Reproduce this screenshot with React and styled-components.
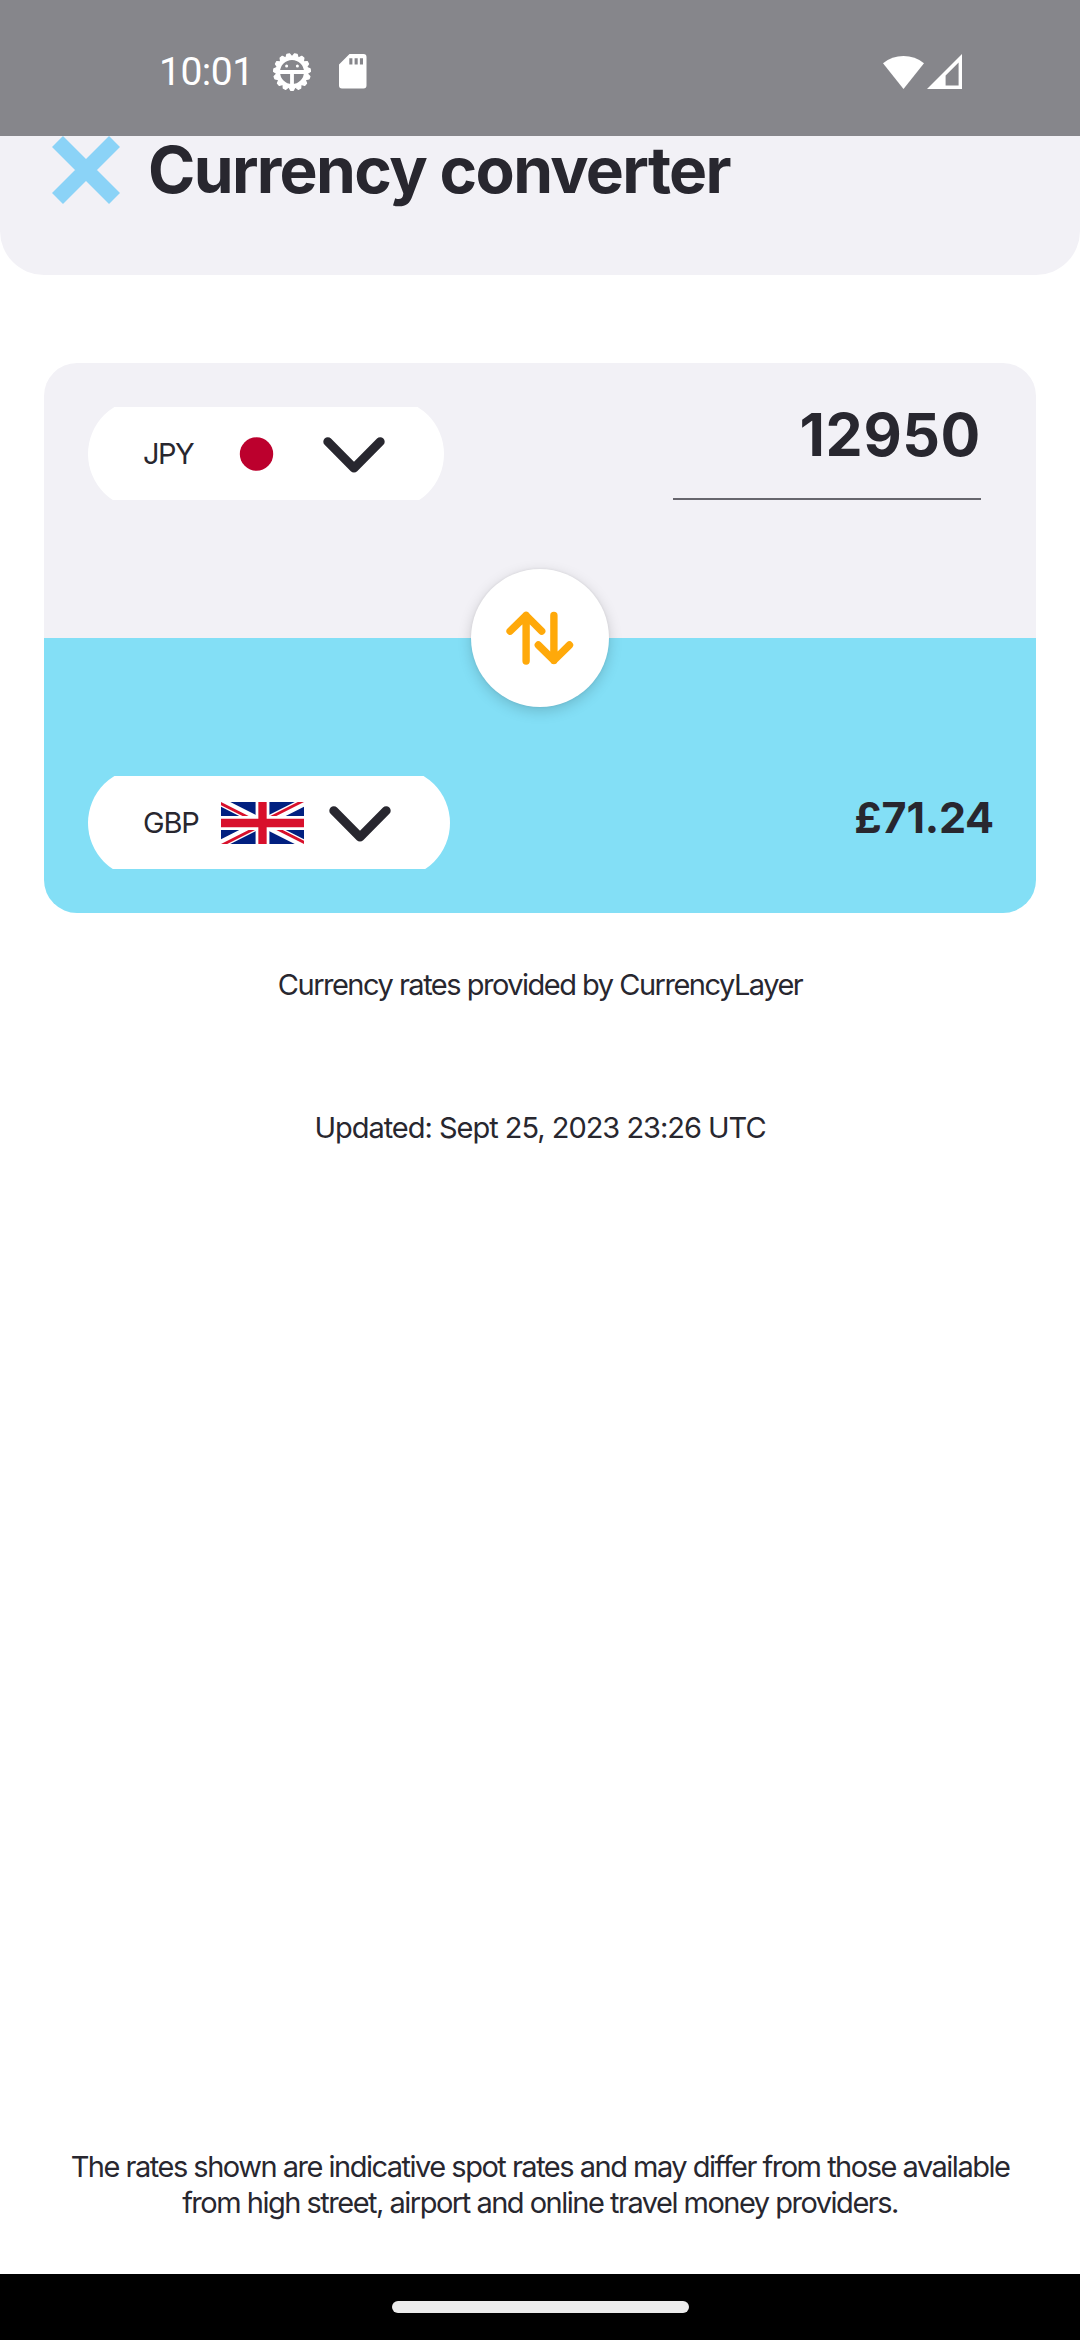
import React from "react";
import styled, { createGlobalStyle } from "styled-components";

const GlobalStyle = createGlobalStyle`
  *, *::before, *::after { box-sizing: border-box; }
  html, body { margin: 0; padding: 0; background: #fff; }
`;

const Screen = styled.div`
  width: 1080px;
  height: 2340px;
  display: flex;
  flex-direction: column;
  overflow: hidden;
  background: #ffffff;
  color: #28272f;
  font-family: Inter, "Liberation Sans", sans-serif;
`;

const StatusBar = styled.header`
  flex: none;
  height: 136px;
  padding: 7px 118px 0 159px;
  display: flex;
  align-items: center;
  justify-content: space-between;
  background: #86868b;
  color: #ffffff;
`;

const StatusGroup = styled.div`
  display: flex;
  align-items: center;
  gap: ${(p) => p.$gap}px;
`;

const Clock = styled.span`
  width: 94px;
  margin-right: 19px;
  font: 400 39px/46px Roboto, sans-serif;
  letter-spacing: -0.5px;
  white-space: nowrap;
`;

const Icon = styled.svg`
  display: block;
  flex: none;
  overflow: visible;
`;

const TitleBar = styled.div`
  flex: none;
  height: 139px;
  padding: 0 50px 71px;
  display: flex;
  align-items: center;
  gap: 26px;
  background: #f2f1f6;
  border-radius: 0 0 44px 44px;
`;

const Title = styled.h1`
  margin: 0;
  font-size: 64px;
  line-height: 68px;
  font-weight: 700;
  letter-spacing: -1.65px;
  white-space: nowrap;
`;

const Main = styled.main`
  flex: 1;
  padding: 88px 44px 53px;
  display: flex;
  flex-direction: column;
  align-items: stretch;
`;

const Card = styled.section`
  position: relative;
  flex: none;
  border-radius: 33px;
  overflow: hidden;
`;

const CardHalf = styled.div`
  height: 275px;
  padding: ${(p) => (p.$target ? "138px 44px 44px" : "44px 44px 138px")};
  display: flex;
  justify-content: space-between;
  align-items: flex-start;
  background: ${(p) => (p.$target ? "#83dff6" : "#f2f1f6")};
`;

const SelectClip = styled.div`
  height: 93px;
  overflow: hidden;
`;

const Select = styled.button`
  width: ${(p) => p.$width}px;
  height: 110px;
  margin: -8px 0 0;
  padding: 0 59px 0 55px;
  border: 0;
  border-radius: 55px;
  display: flex;
  align-items: center;
  background: #ffffff;
  color: inherit;
  font: inherit;
`;

const Code = styled.span`
  flex: 1;
  text-align: left;
  font-size: 29px;
  line-height: 36px;
  letter-spacing: ${(p) => p.$tracking}px;
`;

const FlagSlot = styled.span`
  width: 83px;
  margin-right: 25px;
  display: flex;
  justify-content: center;
`;

const Amount = styled.div`
  width: 308px;
  height: 93px;
  margin-right: 11px;
  border-bottom: 2px solid #67666d;
  text-align: right;
  font-size: 59px;
  line-height: 55px;
  font-weight: 700;
  letter-spacing: 0.6px;
`;

const Result = styled.div`
  margin-right: -2px;
  font-size: 43px;
  line-height: 83px;
  font-weight: 700;
  letter-spacing: -0.2px;
`;

const SwapButton = styled.button`
  position: absolute;
  left: 50%;
  top: 50%;
  transform: translate(-50%, -50%);
  width: 138px;
  height: 138px;
  padding: 0;
  border: 0;
  border-radius: 50%;
  display: flex;
  align-items: center;
  justify-content: center;
  background: #ffffff;
  box-shadow: 0 4px 14px rgba(0, 0, 0, 0.17), 0 0 3px rgba(0, 0, 0, 0.08);
`;

const Note = styled.p`
  margin: ${(p) => p.$top} 0 0;
  text-align: center;
  font-size: 29px;
  line-height: 36px;
  letter-spacing: ${(p) => p.$tracking}px;
  white-space: nowrap;
`;

const NavBar = styled.footer`
  flex: none;
  height: 66px;
  display: flex;
  align-items: center;
  justify-content: center;
  background: #000000;
`;

const Handle = styled.div`
  width: 297px;
  height: 12px;
  border-radius: 6px;
  background: #ececec;
`;

function GearIcon() {
  const teeth = Array.from({ length: 15 }, (_, i) => 180 + i * 24);
  return (
    <Icon width="40" height="40" viewBox="-20 -20 40 40">
      <circle r="14" fill="none" stroke="#fff" strokeWidth="4" />
      {teeth.map((a) => (
        <path
          key={a}
          d="M-3 -15L-1.3 -18.3H1.3L3 -15Z"
          fill="#fff"
          stroke="#fff"
          strokeWidth="1.4"
          strokeLinejoin="round"
          transform={`rotate(${a})`}
        />
      ))}
      <path d="M-14 0H14M0 0V14" stroke="#fff" strokeWidth="3.8" />
      <circle cx="-5.4" cy="-6" r="1.5" fill="#fff" />
      <circle cx="5.4" cy="-6" r="1.5" fill="#fff" />
    </Icon>
  );
}

function SdCardIcon() {
  return (
    <Icon width="28" height="35" viewBox="0 0 28 35">
      <path
        fill="#fff"
        fillRule="evenodd"
        d="M10.5 0H24.5A3 3 0 0 1 27.5 3V31.5A3 3 0 0 1 24.5 34.5H3A3 3 0 0 1 0 31.5V10.5ZM10.3 4.2V10.5H13.4V4.2ZM15.6 4.2V10.5H18.7V4.2ZM20.9 4.2V10.5H24V4.2Z"
      />
    </Icon>
  );
}

function WifiIcon() {
  return (
    <Icon width="41" height="35" viewBox="0 0 41 35">
      <path fill="#fff" d="M20.5 35L0 9.2A33 33 0 0 1 41 9.2Z" />
    </Icon>
  );
}

function SignalIcon() {
  return (
    <Icon width="35" height="35" viewBox="0 0 35 35">
      <path fill="#fff" fillRule="evenodd" d="M35 0V35H0ZM31.6 8.6L18.6 21.4V31.4H31.6Z" />
    </Icon>
  );
}

function CrossLogo() {
  return (
    <Icon width="72" height="68" viewBox="-36 -34 72 68">
      <path d="M-28.5 -28.5L28.5 28.5M28.5 -28.5L-28.5 28.5" stroke="#8bd3f7" strokeWidth="15.5" />
    </Icon>
  );
}

function ChevronIcon() {
  return (
    <Icon width="62" height="38" viewBox="0 -1.5 62 38">
      <path
        d="M4.8 5.2L31 31.6L57.2 5.2"
        fill="none"
        stroke="#28272f"
        strokeWidth="9"
        strokeLinecap="round"
        strokeLinejoin="round"
      />
    </Icon>
  );
}

function JapanFlag() {
  return (
    <Icon width="83" height="56" viewBox="0 0 83 56">
      <rect width="83" height="56" fill="#fff" />
      <circle cx="41.5" cy="28" r="16.7" fill="#bc002d" />
    </Icon>
  );
}

function UkFlag() {
  return (
    <Icon width="83" height="42" viewBox="0 0 60 30" preserveAspectRatio="none">
      <clipPath id="uk-frame">
        <path d="M0 0H60V30H0Z" />
      </clipPath>
      <clipPath id="uk-saltire">
        <path d="M30 15H60V30ZM30 15V30H0ZM30 15H0V0ZM30 15V0H60Z" />
      </clipPath>
      <g clipPath="url(#uk-frame)">
        <path d="M0 0H60V30H0Z" fill="#012080" />
        <path d="M0 0L60 30M60 0L0 30" stroke="#fff" strokeWidth="6" />
        <path d="M0 0L60 30M60 0L0 30" clipPath="url(#uk-saltire)" stroke="#d8102b" strokeWidth="4" />
        <path d="M30 0V30M0 15H60" stroke="#fff" strokeWidth="10" />
        <path d="M30 0V30M0 15H60" stroke="#d8102b" strokeWidth="6" />
      </g>
    </Icon>
  );
}

function SwapIcon() {
  return (
    <Icon width="70" height="56" viewBox="504.5 610 70 56">
      <path
        d="M525.6 661V615.5M509.6 631.2L525.6 615.5L541.2 631.2M553.4 615.5V660.4M537.8 645L553.4 660.4L569 645"
        fill="none"
        stroke="#ffa90a"
        strokeWidth="7.4"
        strokeLinecap="round"
        strokeLinejoin="round"
      />
    </Icon>
  );
}

function CurrencySelect({ code, width, tracking, children }) {
  return (
    <SelectClip>
      <Select $width={width}>
        <Code $tracking={tracking}>{code}</Code>
        <FlagSlot>{children}</FlagSlot>
        <ChevronIcon />
      </Select>
    </SelectClip>
  );
}

export default function App() {
  return (
    <Screen>
      <GlobalStyle />
      <StatusBar>
        <StatusGroup $gap={0}>
          <Clock>10:01</Clock>
          <StatusGroup $gap={27}>
            <GearIcon />
            <SdCardIcon />
          </StatusGroup>
        </StatusGroup>
        <StatusGroup $gap={3}>
          <WifiIcon />
          <SignalIcon />
        </StatusGroup>
      </StatusBar>
      <TitleBar>
        <CrossLogo />
        <Title>Currency converter</Title>
      </TitleBar>
      <Main>
        <Card>
          <CardHalf>
            <CurrencySelect code="JPY" width={356} tracking={-1.5}>
              <JapanFlag />
            </CurrencySelect>
            <Amount>12950</Amount>
          </CardHalf>
          <CardHalf $target>
            <CurrencySelect code="GBP" width={362} tracking={-1.2}>
              <UkFlag />
            </CurrencySelect>
            <Result>£71.24</Result>
          </CardHalf>
          <SwapButton aria-label="Swap currencies">
            <SwapIcon />
          </SwapButton>
        </Card>
        <Note $top="54px" $tracking={-1.5}>Currency rates provided by CurrencyLayer</Note>
        <Note $top="107px" $tracking={-1.02}>Updated: Sept 25, 2023 23:26 UTC</Note>
        <Note $top="auto" $tracking={-1.5}>
          The rates shown are indicative spot rates and may differ from those available
          <br />
          from high street, airport and online travel money providers.
        </Note>
      </Main>
      <NavBar>
        <Handle />
      </NavBar>
    </Screen>
  );
}
